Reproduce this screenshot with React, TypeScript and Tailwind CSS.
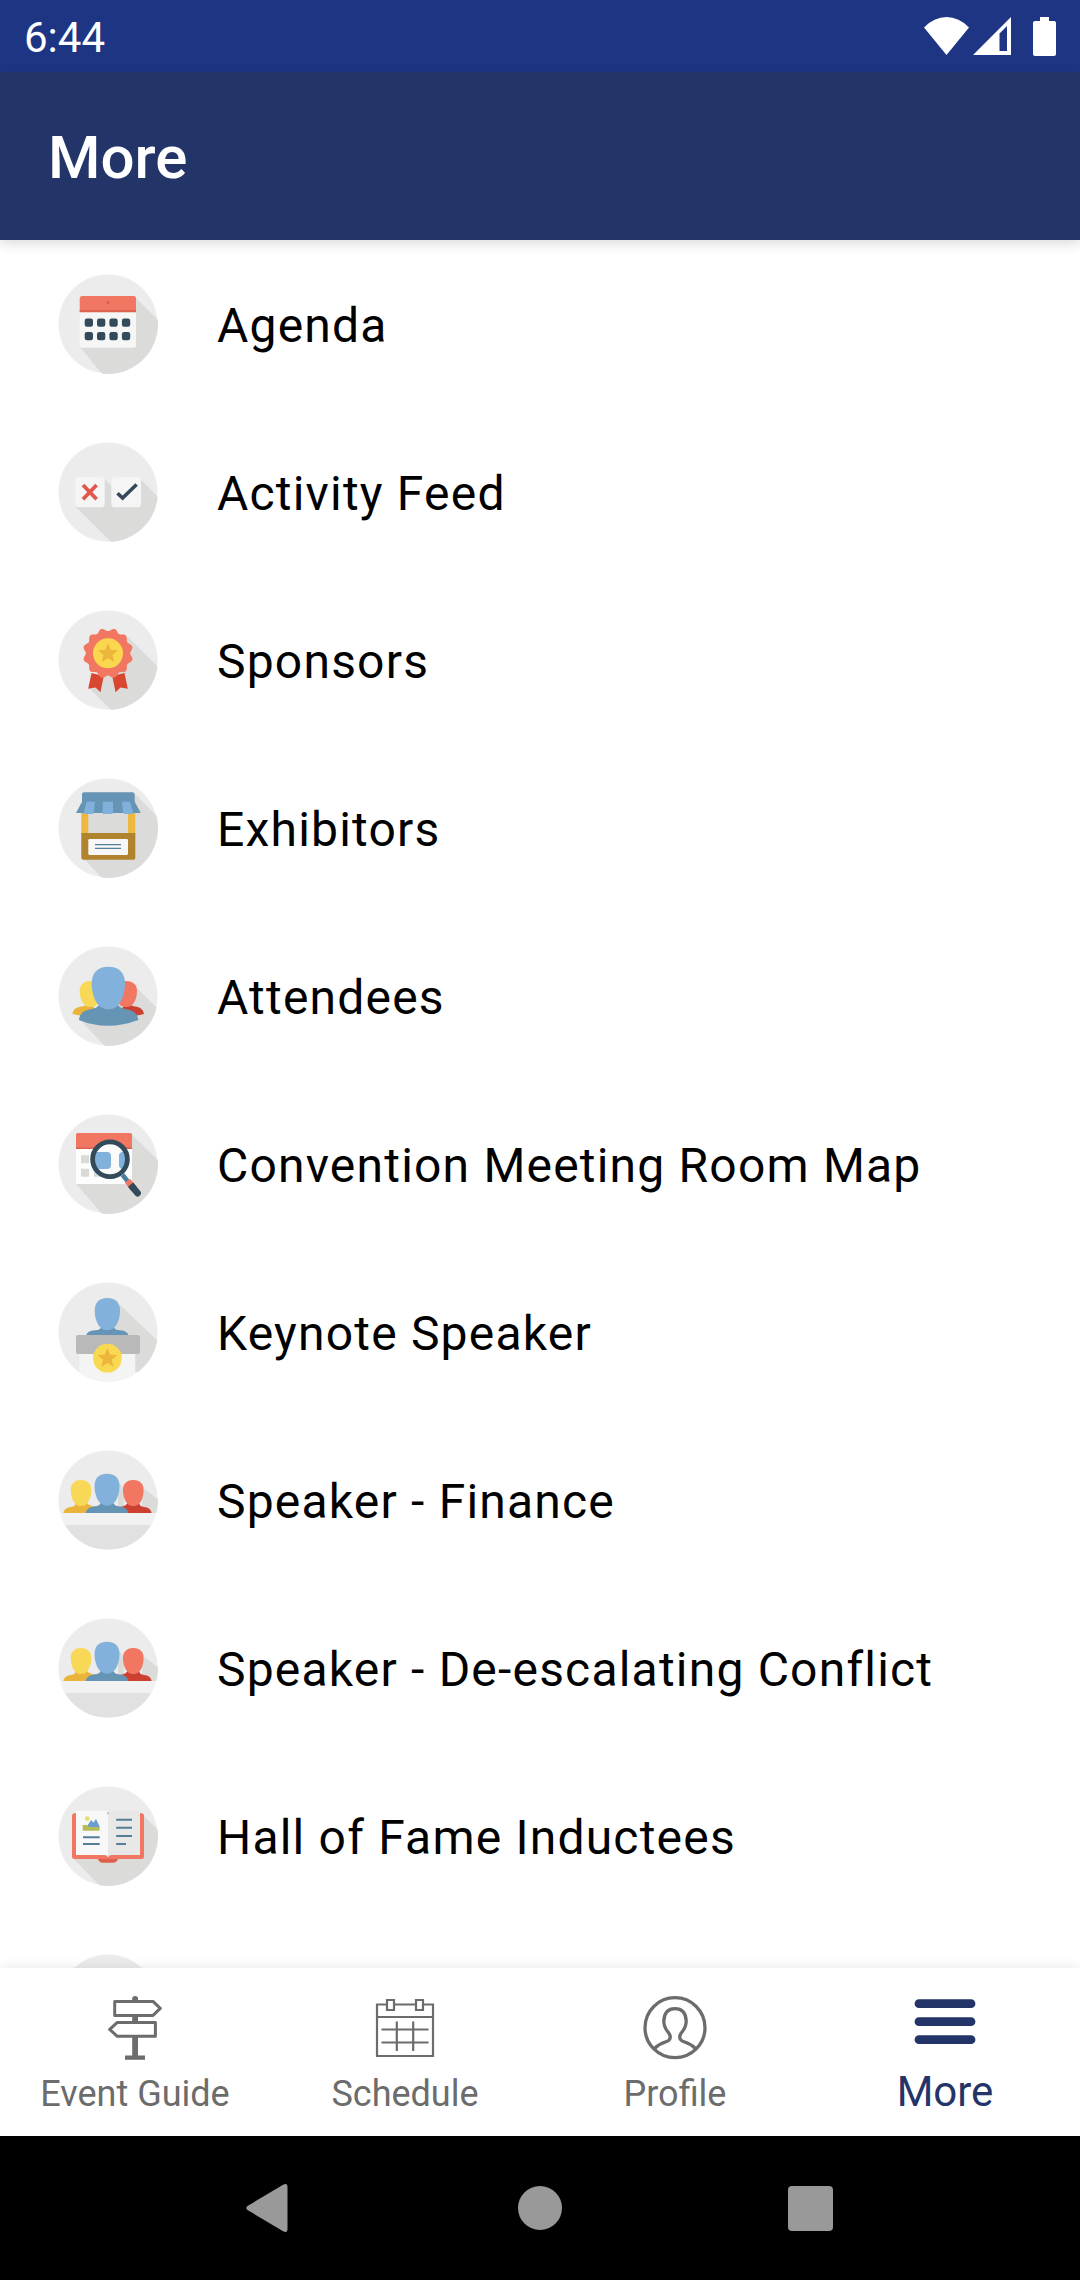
import type { ReactNode } from 'react';

// Round grey badge with the long flat-design shadow behind the drawing
function Disc({ shadow, children }: { shadow?: string; children?: ReactNode }) {
  return (
    <svg viewBox="0 0 100 100" className="w-[100px] h-[100px] rounded-full shrink-0" aria-hidden="true">
      <circle cx="50" cy="50" r="49.6" fill="#ececec" />
      {shadow && <path d={shadow} fill="#dbdbda" />}
      {children}
    </svg>
  );
}

function Star({ x, y, r }: { x: number; y: number; r: number }) {
  const points = Array.from({ length: 10 }, (_, i) => {
    const a = (Math.PI / 5) * i - Math.PI / 2;
    const d = i % 2 === 0 ? r : r * 0.42;
    return `${(x + d * Math.cos(a)).toFixed(2)},${(y + d * Math.sin(a)).toFixed(2)}`;
  }).join(' ');
  return <polygon points={points} fill="#ecb53b" stroke="#ecb53b" strokeLinejoin="round" />;
}

// Wavy outline of the award rosette, 12 scallops
const rosette = Array.from({ length: 180 }, (_, i) => {
  const a = (Math.PI / 90) * i;
  const d = 23.7 - 1.5 * Math.cos(12 * a);
  return `${(50 + d * Math.cos(a)).toFixed(2)},${(43.3 + d * Math.sin(a)).toFixed(2)}`;
}).join(' ');

// Egg-shaped head that fills the box x..x+w, y..y+h
function Head({ x, y, w, h, fill }: { x: number; y: number; w: number; h: number; fill: string }) {
  const cx = x + w / 2;
  const d = `M${cx} ${y} C${x + w * 0.85} ${y} ${x + w} ${y + h * 0.17} ${x + w} ${y + h * 0.38}
    C${x + w} ${y + h * 0.66} ${x + w * 0.86} ${y + h} ${cx} ${y + h}
    C${x + w * 0.14} ${y + h} ${x} ${y + h * 0.66} ${x} ${y + h * 0.38}
    C${x} ${y + h * 0.17} ${x + w * 0.15} ${y} ${cx} ${y}Z`;
  return <path d={d} fill={fill} />;
}

function AgendaIcon() {
  return (
    <Disc shadow="M77 23 L101 47 V101 H45 L22 73Z">
      <rect x="21.7" y="22" width="56.3" height="51.7" rx="2.5" fill="#f6f6f6" />
      <path d="M21.7 38V24.5Q21.7 22 24.2 22H75.5Q78 22 78 24.5V38Z" fill="#f17762" />
      <path d="M21.7 36H78V38.2H21.7Z" fill="#dc6552" />
      <circle cx="50" cy="28.5" r="1.6" fill="#d95f4d" />
      {[44.5, 58].map(y =>
        [26.7, 39, 51.4, 63.9].map(x => (
          <rect key={`${x}-${y}`} x={x} y={y} width="8.3" height="8.3" rx="2.2" fill="#324a5a" />
        ))
      )}
    </Disc>
  );
}

function ActivityIcon() {
  return (
    <Disc shadow="M45.5 36 L62 52 V36 H81.5 L101 56 V101 H54 L18 65Z">
      <rect x="17.3" y="35.3" width="29.4" height="30" rx="3.5" fill="#f5f5f5" />
      <rect x="53.3" y="35.3" width="29.7" height="30" rx="3.5" fill="#f5f5f5" />
      <path d="M25 43 L38.6 57.2 M38.6 43 L25 57.2" stroke="#e2574c" strokeWidth="3.8" />
      <path d="M59.5 51.2 L64.6 56 L78.6 42.5" fill="none" stroke="#34495e" strokeWidth="3.6" />
    </Disc>
  );
}

function SponsorsIcon() {
  return (
    <Disc shadow="M70 27 L101 58 V101 H54 L31 78 L45 60Z">
      <path d="M33.5 63 L45.8 66 L42.4 82.2 L37.5 77.6 L30.2 78.8Z" fill="#d8472f" />
      <path d="M66.5 63 L54.2 66 L57.6 82.2 L62.5 77.6 L69.8 78.8Z" fill="#d8472f" />
      <polygon points={rosette} fill="#f17762" />
      <circle cx="50" cy="43.3" r="15" fill="#fbd74f" />
      <Star x={50} y={43.6} r={9.5} />
    </Disc>
  );
}

function ExhibitorsIcon() {
  return (
    <Disc shadow="M76 15 L101 40 V101 H45 L26 81 V34Z">
      <path d="M23.3 34H30.3V56H23.3Z M70 34H77.3V56H70Z" fill="#eeb73f" />
      <path d="M23.3 55H77.3V79.7Q77.3 81.8 75.3 81.8H25.3Q23.3 81.8 23.3 79.7Z" fill="#b0832e" />
      <rect x="30.3" y="61" width="39.7" height="16" rx="1.2" fill="#f7f7f7" />
      <path d="M37 66.7H63 M37 70.4H63" stroke="#557d97" strokeWidth="1.3" />
      <path d="M24 16.5Q24 14.3 26.2 14.3H74.5Q76.7 14.3 76.7 16.5V23.7L82.8 35H18L24 23.7Z" fill="#6594b4" />
      <path d="M28.7 23.7H37L35.8 34.5Q35.5 36 34 36H27Q25.3 36 25.8 34.5Z" fill="#80b1dc" />
      <path d="M44.9 23.7H55V34.5Q55 36 53.5 36H46Q44.4 36 44.5 34.5Z" fill="#80b1dc" />
      <path d="M63.8 23.7H72L75 34.5Q75.3 36 73.6 36H67Q65.4 36 65.2 34.5Z" fill="#80b1dc" />
    </Disc>
  );
}

function AttendeesIcon() {
  return (
    <Disc shadow="M78 41 L101 64 V101 H48 L22 74Z">
      <path d="M14.3 68Q15 62 22 60.8Q29 60 32 56L42 70H27Q20 69.5 14.3 68Z" fill="#eab43a" />
      <path d="M86 68Q85 62 79 60.8Q72 60 69 56L58 70H74Q81 69.5 86 68Z" fill="#cd3f30" />
      <Head x={21.7} y={35} w={22} h={26} fill="#f8d957" />
      <Head x={57} y={35} w={22} h={26} fill="#f17762" />
      <path d="M50 52L40 60Q38 62.5 32 63.2Q21.5 65 21 74Q35 79.8 50 79.8T80.3 74Q79.5 65 69 63.2Q63 62.5 61 60Z" fill="#6594b4" />
      <Head x={33.7} y={20.7} w={33.3} h={42.6} fill="#82b1db" />
    </Disc>
  );
}

function MapIcon() {
  return (
    <Disc shadow="M73 20 L101 47 V101 H45 L18 70Z">
      <rect x="18" y="19" width="56" height="51" rx="1.5" fill="#fdfdfd" />
      <path d="M18 34.7V20.5Q18 19 19.5 19H72.5Q74 19 74 20.5V34.7Z" fill="#f17762" />
      <path d="M18 33.2H74V34.9H18Z" fill="#dc6552" />
      <path d="M23 41.3H31V49.3H23Z M23 54.8H31V62.8H23Z M36 54.8H44V62.8H36Z" fill="#d9d9d8" />
      <path d="M64.5 60.8L70.5 68.4" stroke="#4a7f9c" strokeWidth="4.6" />
      <path d="M69.5 66.8L74 72.4" stroke="#f17762" strokeWidth="6.6" />
      <path d="M74.8 73.3L79.6 79.2" stroke="#34495a" strokeWidth="6.6" strokeLinecap="round" />
      <path d="M72.6 70.6L76 74.8" stroke="#34495a" strokeWidth="6.6" />
      <circle cx="52" cy="45.3" r="17" fill="#fbfbfb" />
      <path d="M37.5 38H49Q53 38 53 42V51Q53 55 49 55H39.5Q35 50 35.5 44Z" fill="#82b1db" />
      <path d="M68 38H65Q61 38 61 42V51Q61 54 64 55Q72 47 68 38Z" fill="#82b1db" />
      <circle cx="52" cy="45.3" r="17.4" fill="none" stroke="#324a5a" strokeWidth="4.8" />
    </Disc>
  );
}

function KeynoteIcon() {
  return (
    <Disc shadow="M61 22 L101 60 V90 H77 V60 H50Z">
      <path d="M28.3 53Q29 49 37 48.3Q43 48 44 44H55Q56 48 62 48.3Q69.5 49 70.3 53Z" fill="#6594b4" />
      <Head x={36.7} y={16} w={25.3} h={32.2} fill="#82b1db" />
      <path d="M21.3 70H77.3V101H21.3Z" fill="#f4f4f4" />
      <rect x="18" y="53" width="64" height="19" rx="2" fill="#b9b9b9" />
      <circle cx="49.4" cy="76.2" r="14.4" fill="#f9d852" />
      <Star x={49.4} y={76.4} r={9.5} />
    </Disc>
  );
}

function SpeakersIcon() {
  return (
    <Disc shadow="M60 32L66 38V60H60Z M84 37 L101 50 V63 H84Z">
      <path d="M5.3 63Q6.5 57.5 13 57Q18 56.5 18 52H29Q29 56 40 57V63Z" fill="#eab43a" />
      <path d="M93.7 63Q92.5 57.5 86 57Q81 56.5 81 52H70Q69 56 62 57V63Z" fill="#cd3f30" />
      <Head x={12.7} y={30} w={20.6} h={26} fill="#f8d957" />
      <Head x={65} y={30} w={20.6} h={26} fill="#f17762" />
      <path d="M27.7 63Q28.5 57.3 36 56.5Q43 56 43 51H55Q55 56 62 56.5Q69.5 57.3 70.3 63Z" fill="#6594b4" />
      <Head x={36.5} y={23.7} w={25} h={32} fill="#82b1db" />
      <path d="M0 63H100V75H0Z" fill="#f2f2f2" />
      <path d="M7 75H93Q80 99.6 50 99.6T7 75Z" fill="#e1e1e1" />
    </Disc>
  );
}

function BookIcon() {
  return (
    <Disc shadow="M85 29 L101 45 V101 H43 L15 72Z">
      <path d="M39.5 72H60.5Q59 76.8 55 76.8H44.5Q41 76.8 39.5 72Z" fill="#dd604d" />
      <path d="M14 30Q14 27.3 16.5 27.3H83.5Q86 27.3 86 30V70.5Q86 73 83.5 73H16.5Q14 73 14 70.5Z" fill="#f17762" />
      <path d="M18 24.7H48Q50 24.7 50 27V71.3Q49 69 46 69H18Z" fill="#f8f8f8" />
      <path d="M82 24.7H52Q50 24.7 50 27V71.3Q51 69 54 69H82Z" fill="#e8e8e7" />
      <circle cx="50" cy="27.3" r="1.2" fill="#c9c9c9" />
      <circle cx="29.2" cy="32.6" r="2.3" fill="#e8dc6b" />
      <path d="M28.5 41L33 34L35.5 36.5L38 33L41.5 40V42H28.5Z" fill="#6c9fd0" />
      <path d="M24.7 39H29L31 41H41.5V44.8H24.7Z" fill="#b5bd55" />
      <path d="M25 51.2H41.7 M25 58.1H41.7 M58.2 33.7H74 M58.2 41.8H74 M58.2 49.9H74 M58.2 58.1H68" stroke="#557d97" strokeWidth="2" />
    </Disc>
  );
}

const menu = [
  { label: 'Agenda', Icon: AgendaIcon },
  { label: 'Activity Feed', Icon: ActivityIcon },
  { label: 'Sponsors', Icon: SponsorsIcon },
  { label: 'Exhibitors', Icon: ExhibitorsIcon },
  { label: 'Attendees', Icon: AttendeesIcon },
  { label: 'Convention Meeting Room Map', Icon: MapIcon },
  { label: 'Keynote Speaker', Icon: KeynoteIcon },
  { label: 'Speaker - Finance', Icon: SpeakersIcon },
  { label: 'Speaker - De-escalating Conflict', Icon: SpeakersIcon },
  { label: 'Hall of Fame Inductees', Icon: BookIcon },
];

const tabs = [
  {
    label: 'Event Guide',
    icon: (
      <>
        <path d="M15.7 9.4H54L61.3 16.3L54 23.4H15.7Z M56.4 30.4H18.3L10.7 37.4L18.3 44.3H56.4Z" fill="none" stroke="currentColor" strokeWidth="3" strokeLinejoin="round" />
        <path d="M33.2 8V6.5Q33.2 4 36.1 4T39 6.5V8Z M33.2 24H39V30H33.2Z M33.2 45H39V63.5H46V67.7H26V63.5H33.2Z" fill="currentColor" />
      </>
    ),
  },
  {
    label: 'Schedule',
    icon: (
      <path
        d="M17 12.5H8V64H64V12.5H55 M26 12.5H46 M8 25H64 M18 8H25V18H18Z M47 8H54V18H47Z M12.5 37.5H59.5 M12.5 50.5H59.5 M27.8 29.5V59 M44.2 29.5V59"
        fill="none"
        stroke="currentColor"
        strokeWidth="2.2"
      />
    ),
  },
  {
    label: 'Profile',
    icon: (
      <g fill="none" stroke="currentColor" strokeWidth="3.3">
        <circle cx="36" cy="35.7" r="30" />
        <path d="M15.5 56.5Q20 52 27 49.8Q31 48.5 31.2 45.5Q31.5 43 29 40Q24.8 35 24.8 29Q25.4 16.7 36 16.7T47.2 29Q47.2 35 43 40Q40.5 43 40.8 45.5Q41 48.5 45 49.8Q52 52 56.5 56.5" />
      </g>
    ),
  },
  {
    label: 'More',
    active: true,
    icon: <path d="M10 11.7H62 M10 29.7H62 M10 47.7H62" stroke="currentColor" strokeWidth="8.8" strokeLinecap="round" />,
  },
];

export default function App() {
  return (
    <div className="flex h-screen flex-col overflow-hidden bg-white font-['Roboto',sans-serif]">
      {/* Status bar */}
      <div className="flex h-[72px] shrink-0 items-center justify-between bg-[#1e3584] px-6 text-white">
        <span className="text-[42px] leading-none pt-1">6:44</span>
        <div className="flex items-center gap-1">
          <svg viewBox="0 0 45 38" className="w-[45px] h-[38px]" aria-hidden="true">
            <path d="M0 10.5Q10 0 22.5 0T45 10.5L22.5 38Z" fill="currentColor" />
          </svg>
          <svg viewBox="0 0 38 38" className="w-[38px] h-[38px]" aria-hidden="true">
            <path fillRule="evenodd" d="M38 0V38H0Z M34 9L26.5 16.5V34H34Z" fill="currentColor" />
          </svg>
          <svg viewBox="0 0 23 39" className="w-[23px] h-[39px] ml-[18px]" aria-hidden="true">
            <path d="M7 0H16V4H21Q23 4 23 6V37Q23 39 21 39H2Q0 39 0 37V6Q0 4 2 4H7Z" fill="currentColor" />
          </svg>
        </div>
      </div>

      {/* App bar */}
      <header className="z-10 flex h-[168px] shrink-0 items-center bg-[#233468] px-12 shadow-[0_4px_12px_rgba(0,0,0,0.14)]">
        <h1 className="pt-1 text-6xl font-medium text-white">More</h1>
      </header>

      {/* Menu */}
      <main className="min-h-0 flex-1 overflow-y-auto [scrollbar-width:none]">
        <ul>
          {menu.map(({ label, Icon }) => (
            <li key={label}>
              <a href="#" className="flex h-[168px] items-center gap-[59px] px-[58px]">
                <Icon />
                <span className="whitespace-nowrap pt-1 text-5xl tracking-wide text-black">{label}</span>
              </a>
            </li>
          ))}
          <li className="flex h-[168px] items-center px-[58px]">
            <Disc />
          </li>
        </ul>
      </main>

      {/* Bottom tabs */}
      <nav className="z-10 grid h-[168px] shrink-0 grid-cols-4 bg-white shadow-[0_-2px_10px_rgba(0,0,0,0.08)]">
        {tabs.map(({ label, icon, active }) => (
          <button
            key={label}
            type="button"
            className={`flex flex-col items-center justify-start pt-6 ${active ? 'text-[#233468]' : 'text-[#6c6c6c]'}`}
          >
            <svg viewBox="0 0 72 72" className="w-[72px] h-[72px]" aria-hidden="true">
              {icon}
            </svg>
            <span className={active ? 'text-[42px] leading-[56px]' : 'text-4xl leading-[60px]'}>{label}</span>
          </button>
        ))}
      </nav>

      {/* System navigation */}
      <div className="grid h-36 shrink-0 grid-cols-8 items-center bg-black text-[#999999]">
        <button type="button" aria-label="Back" className="col-span-2 col-start-2 flex justify-center">
          <svg viewBox="0 0 48 48" className="h-12 w-12" aria-hidden="true">
            <path d="M1.5 22Q-1 24 1.5 26L37.5 47.5Q41.5 49 41.5 45V3Q41.5 -1 37.5 0.5Z" fill="currentColor" />
          </svg>
        </button>
        <button type="button" aria-label="Home" className="col-span-2 flex justify-center">
          <span className="h-11 w-11 rounded-full bg-[#999999]" />
        </button>
        <button type="button" aria-label="Recent apps" className="col-span-2 flex justify-center">
          <span className="h-[45px] w-[45px] rounded bg-[#999999]" />
        </button>
      </div>
    </div>
  );
}
